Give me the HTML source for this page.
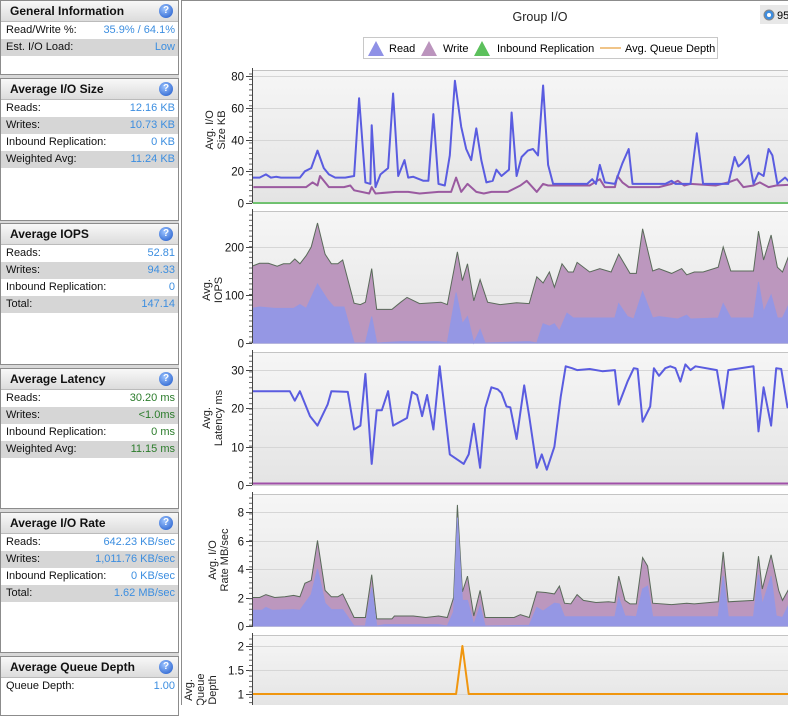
<!DOCTYPE html>
<html><head><meta charset="utf-8"><style>
*{margin:0;padding:0;box-sizing:border-box}
body{width:788px;height:705px;overflow:hidden;background:#fff;font-family:"Liberation Sans","DejaVu Sans",sans-serif;font-size:11px;position:relative}
#left{position:absolute;left:0;top:0;width:179px;height:705px;background:#d8d8d8}
.pn{position:absolute;left:0;width:179px;background:#fff;border:1px solid #8c8c8c}
.hd{height:21px;background:linear-gradient(#f8f8f8,#dcdcdc);border-bottom:1px solid #bbb;font-weight:bold;font-size:12px;line-height:21px;padding-left:9px;position:relative;color:#111}
.q{position:absolute;right:5px;top:3px;width:14px;height:14px;border-radius:50%;background:radial-gradient(circle at 40% 35%,#9cc4ff,#1a55c8);color:#fff;font-size:10px;line-height:14px;text-align:center;font-weight:bold}
.r{height:17px;line-height:17px;padding:0 3px 0 5px;display:flex;justify-content:space-between;color:#111}
.r.a{background:#d6d6d6}
.r span{color:#3c8ee0}
.g span{color:#2b7c2b}
#right{position:absolute;left:181px;top:0;width:607px;height:705px;border-left:1px solid #8c8c8c;border-top:1px solid #8c8c8c}
</style></head><body>
<div id="left">
<div class="pn" style="top:0;height:75px"><div class="hd">General Information<div class="q">?</div></div>
<div class="r">Read/Write %:<span>35.9% / 64.1%</span></div><div class="r a">Est. I/O Load:<span>Low</span></div></div>
<div class="pn" style="top:78px;height:143px"><div class="hd">Average I/O Size<div class="q">?</div></div>
<div class="r">Reads:<span>12.16 KB</span></div><div class="r a">Writes:<span>10.73 KB</span></div><div class="r">Inbound Replication:<span>0 KB</span></div><div class="r a">Weighted Avg:<span>11.24 KB</span></div></div>
<div class="pn" style="top:223px;height:142px"><div class="hd">Average IOPS<div class="q">?</div></div>
<div class="r">Reads:<span>52.81</span></div><div class="r a">Writes:<span>94.33</span></div><div class="r">Inbound Replication:<span>0</span></div><div class="r a">Total:<span>147.14</span></div></div>
<div class="pn g" style="top:368px;height:141px"><div class="hd">Average Latency<div class="q">?</div></div>
<div class="r">Reads:<span>30.20 ms</span></div><div class="r a">Writes:<span>&lt;1.0ms</span></div><div class="r">Inbound Replication:<span>0 ms</span></div><div class="r a">Weighted Avg:<span>11.15 ms</span></div></div>
<div class="pn" style="top:512px;height:141px"><div class="hd">Average I/O Rate<div class="q">?</div></div>
<div class="r">Reads:<span>642.23 KB/sec</span></div><div class="r a">Writes:<span>1,011.76 KB/sec</span></div><div class="r">Inbound Replication:<span>0 KB/sec</span></div><div class="r a">Total:<span>1.62 MB/sec</span></div></div>
<div class="pn" style="top:656px;height:60px"><div class="hd">Average Queue Depth<div class="q">?</div></div>
<div class="r">Queue Depth:<span>1.00</span></div></div>
</div>
<div id="right"></div>
<svg id="s" width="788" height="705" style="position:absolute;left:0;top:0" font-family="'Liberation Sans','DejaVu Sans',sans-serif" font-size="11"></svg>
<script>
var S='';
S+='<defs><linearGradient id="bg" x1="0" y1="0" x2="0" y2="1"><stop offset="0" stop-color="#f6f6f6"/><stop offset="1" stop-color="#e4e4e4"/></linearGradient><clipPath id="cp"><rect x="253" y="0" width="535" height="705"/></clipPath></defs>';
S+='<text x="540" y="21" text-anchor="middle" font-size="12.5" fill="#222">Group I/O</text>';
S+='<rect x="760" y="5" width="28" height="19" fill="#e8e8e8"/><circle cx="769" cy="15" r="5" fill="#3d8de0" stroke="#888"/><circle cx="769" cy="15" r="2" fill="#fff"/><text x="777" y="19" font-size="11">95</text>';
S+='<rect x="363.5" y="37.5" width="354" height="21" fill="#fff" stroke="#c8c8c8"/>';
S+='<path d="M368 56 L376 41 L384 56Z" fill="#8f91e6"/><text x="389" y="52">Read</text>';
S+='<path d="M421 56 L429 41 L437 56Z" fill="#bb94bd"/><text x="443" y="52">Write</text>';
S+='<path d="M474 56 L482 41 L490 56Z" fill="#5cc05c"/><text x="497" y="52">Inbound Replication</text>';
S+='<line x1="600" y1="48" x2="621" y2="48" stroke="#e08a10"/><text x="625" y="52">Avg. Queue Depth</text>';
function X(x){return 252+(x-252)*1.26}
function P(a,f){return a.map(function(p){return X(p[0]).toFixed(1)+','+f(p[1]).toFixed(1)}).join(' ')}
function panel(y0,y1,ticks,map,fmt,titles,tx){
 S+='<rect x="252" y="'+y0+'" width="536" height="'+(y1-y0)+'" fill="url(#bg)"/>';
 S+='<line x1="252" y1="'+(y0+0.5)+'" x2="788" y2="'+(y0+0.5)+'" stroke="#c4c4c4"/>';
 ticks.forEach(function(t){var y=Math.round(map(t))+0.5;
  S+='<line x1="252" y1="'+y+'" x2="788" y2="'+y+'" stroke="#d6d6d6"/>';
  S+='<line x1="246" y1="'+y+'" x2="252" y2="'+y+'" stroke="#444"/>';
  S+='<text x="244" y="'+(y+4)+'" text-anchor="end" font-size="11.5" fill="#111">'+fmt(t)+'</text>';});
 for(var y=y0+4;y<y1;y+=5.3)S+='<line x1="249" y1="'+y.toFixed(1)+'" x2="252" y2="'+y.toFixed(1)+'" stroke="#666"/>';
 S+='<line x1="252.5" y1="'+(y0-2)+'" x2="252.5" y2="'+y1+'" stroke="#444"/>';
 var cx=tx[0],cy=tx[1];
 S+='<text transform="translate('+cx+','+cy+') rotate(-90)" text-anchor="middle" font-size="11" fill="#222">';
 titles.forEach(function(t,i){S+='<tspan x="0" dy="'+(i?12:0)+'">'+t+'</tspan>'});S+='</text>';
}
function area(a,f,base,fill,stroke){S+='<polygon clip-path="url(#cp)" points="252,'+base+' '+P(a,f)+' 900,'+base+'" fill="'+fill+'" stroke="'+stroke+'" stroke-width="1"/>';}
function line(a,f,c,w){S+='<polyline clip-path="url(#cp)" points="'+P(a,f)+'" fill="none" stroke="'+c+'" stroke-width="'+w+'" stroke-linejoin="round"/>';}
var m1=function(v){return 203-v*1.5875};
panel(70,203,[0,20,40,60,80],m1,String,['Avg. I/O','Size KB'],[213,130]);
var wr=[[253,10],[285,10],[295,10],[300,13],[304,11],[306,17],[313,10],[325,10],[330,11],[333,8],[345,6],[347,10],[350,6],[366,7],[376,7],[385,6],[400,7],[410,7],[414,16],[418,7],[423,12],[430,7],[436,6],[442,7],[455,7],[465,11],[470,14],[478,7],[483,12],[487,11],[500,11],[520,11],[528,15],[532,10],[540,10],[542,17],[546,13],[551,10],[575,10],[585,12],[590,14],[595,11],[600,12],[620,11],[630,13],[637,15],[642,10],[650,11],[655,13],[662,10],[668,11],[690,12],[703,11]];
var rd=[[252,16],[258,16],[263,18],[267,16],[271,16.5],[275,16],[290,16],[294,20],[299,22],[304,33],[309,22],[313,18],[318,16],[326,16],[333,17],[337,66],[342,13],[346,12],[347,49],[350,10],[354,18],[360,22],[364,69],[368,17],[373,27],[376,16],[380,16.5],[388,14],[392,14],[396,56],[400,12],[405,11],[409,30],[413,77],[418,48],[422,34],[426,27],[430,47],[434,27],[438,13],[443,14],[446,21],[450,17],[456,21],[458,57],[462,17],[466,29],[471,33],[475,34],[479,30],[483,74],[487,24],[491,12],[518,12],[522,15],[525,12],[528,24],[532,13],[540,12],[546,25],[551,34],[554,12],[580,12],[585,14],[588,12],[600,12],[605,44],[610,12],[630,12],[635,29],[638,23],[641,25],[646,30],[650,12],[654,19],[658,17],[662,34],[665,30],[669,12],[675,16],[680,12],[695,12],[703,16]];
line([[252,0],[703,0]],m1,'#4cb84c',1.5);
line(wr,m1,'#9a5aa0',2);line(rd,m1,'#5a5ce0',2);
var m2=function(v){return 343-v*0.48};
panel(211,343,[0,100,200],m2,String,['Avg.','IOPS'],[210,290]);
var tot=[[252,160],[258,166],[265,166],[272,160],[277,165],[282,165],[286,175],[290,165],[295,182],[299,200],[304,250],[310,185],[315,165],[320,165],[324,173],[333,83],[338,80],[342,85],[347,155],[351,70],[363,70],[370,85],[375,95],[385,82],[402,85],[407,80],[415,190],[419,130],[423,165],[428,88],[433,132],[439,85],[449,80],[462,84],[472,82],[478,138],[483,125],[488,148],[492,116],[498,165],[503,148],[507,148],[510,168],[520,148],[528,155],[537,148],[543,185],[552,145],[557,145],[562,238],[570,150],[575,155],[585,145],[593,155],[597,142],[603,148],[610,148],[622,158],[626,200],[632,150],[650,150],[654,233],[658,173],[664,225],[669,158],[673,148],[678,182],[682,190],[687,222],[692,165],[697,140],[703,165]];
var ri=[[252,72],[258,75],[270,72],[285,72],[290,80],[295,72],[304,123],[312,90],[317,75],[325,75],[333,0],[342,0],[347,55],[351,0],[370,3],[400,3],[407,0],[414,105],[419,40],[423,55],[428,0],[433,28],[437,0],[472,3],[478,0],[483,40],[488,35],[492,40],[496,25],[502,62],[507,52],[540,52],[543,82],[550,55],[555,50],[562,107],[570,52],[575,55],[590,50],[597,58],[600,50],[622,52],[626,82],[632,52],[650,52],[654,127],[658,65],[664,100],[669,52],[673,52],[678,80],[682,75],[687,107],[692,72],[697,50],[703,65]];
area(tot,m2,343,'#bc97be','#5a6a5a');area(ri,m2,343,'#9597e4','#9597e4');
var m3=function(v){return 485-v*3.83};
panel(352,485,[0,10,20,30],m3,String,['Avg.','Latency ms'],[210,418]);
var lt=[[252,24.5],[282,24.5],[286,22],[290,24.5],[298,18],[304,15.5],[312,21],[315,24.5],[328,24.3],[333,14.5],[338,15.5],[342,29],[347,5.5],[351,19.5],[355,19.5],[360,24.5],[364,15.5],[375,17.5],[379,24.3],[383,23.5],[387,18],[391,23.5],[396,14.5],[401,31],[409,8],[420,5.5],[424,8],[428,16],[433,4.5],[437,20],[442,25.5],[447,25],[450,24],[454,20.5],[457,20.3],[462,12],[468,26],[472,18],[478,4.5],[482,8],[486,4],[492,10],[497,23],[501,31],[506,30.5],[510,30],[520,30.3],[530,29.7],[540,30],[543,21],[550,27],[555,30.5],[558,30.3],[562,16.5],[568,20.5],[571,30.5],[575,28.5],[580,30.5],[584,31],[588,30.5],[592,27],[596,31.5],[600,30],[604,31],[621,30],[626,20],[630,30],[650,31],[654,14],[658,25.5],[664,15.5],[668,30.5],[672,30.3],[677,20.3],[681,21.7],[686,15.5],[696,31],[703,26]];
line([[252,0.4],[703,0.4]],m3,'#a050a8',2);line(lt,m3,'#5a5ce0',2);
var m4=function(v){return 626-v*14.25};
panel(494,627,[0,2,4,6,8],m4,String,['Avg. I/O','Rate MB/sec'],[216,560]);
var rt=[[252,2],[258,2],[263,2.2],[270,2],[278,2.05],[285,2.15],[290,2.05],[294,3],[299,3.2],[304,6],[310,2.5],[315,2.05],[320,2.05],[324,2.25],[333,0.6],[342,0.6],[347,3.6],[351,0.5],[363,0.5],[365,0.7],[380,0.7],[390,0.6],[400,0.7],[407,0.6],[412,2],[415,8.5],[419,2.4],[423,3.5],[428,0.7],[433,2.5],[437,0.6],[460,0.6],[465,0.8],[472,0.6],[478,2.4],[485,2.35],[492,2.25],[496,2.8],[500,1.6],[505,1.55],[510,2.2],[515,1.8],[525,1.65],[535,1.7],[540,1.65],[543,3.5],[548,1.8],[552,1.55],[557,1.55],[562,4.8],[566,4.2],[570,1.6],[585,1.5],[597,1.6],[603,1.55],[622,1.7],[626,5.2],[630,1.7],[650,1.8],[654,4.9],[657,2.6],[664,5],[670,2.5],[673,1.8],[678,2.6],[682,2.8],[687,5.4],[692,3.5],[697,1.6],[703,2.1]];
var rr=[[252,1.1],[260,1.1],[263,1.3],[268,1.1],[285,1.15],[290,1.1],[299,2.2],[304,4],[310,1.6],[315,1.15],[324,1.15],[333,0],[342,0],[347,2.7],[351,0],[357,0.1],[400,0.1],[407,0],[412,1],[415,7.6],[419,1.8],[423,1.8],[428,0.1],[433,1.4],[437,0],[472,0.05],[478,1.3],[483,1.05],[492,1.6],[496,1.55],[500,0.65],[540,0.65],[543,2],[548,0.7],[557,0.65],[562,2.6],[566,2.8],[570,0.65],[622,0.65],[626,3.5],[630,0.65],[650,0.65],[654,3.6],[657,1.5],[664,3.5],[668,0.7],[673,0.6],[678,1.5],[682,1.2],[687,3.6],[692,2.2],[697,0.6],[703,1]];
area(rt,m4,626,'#bc97be','#5a6a5a');area(rr,m4,626,'#9597e4','#9597e4');
var m5=function(v){return 694-(v-1)*48};
panel(635,706,[1,1.5,2],m5,function(t){return t},['Avg.','Queue','Depth'],[192,690]);
line([[252,1],[414,1],[419,2],[424,1],[703,1]],m5,'#f0960f',2);
document.getElementById('s').innerHTML=S;
</script>
</body></html>
